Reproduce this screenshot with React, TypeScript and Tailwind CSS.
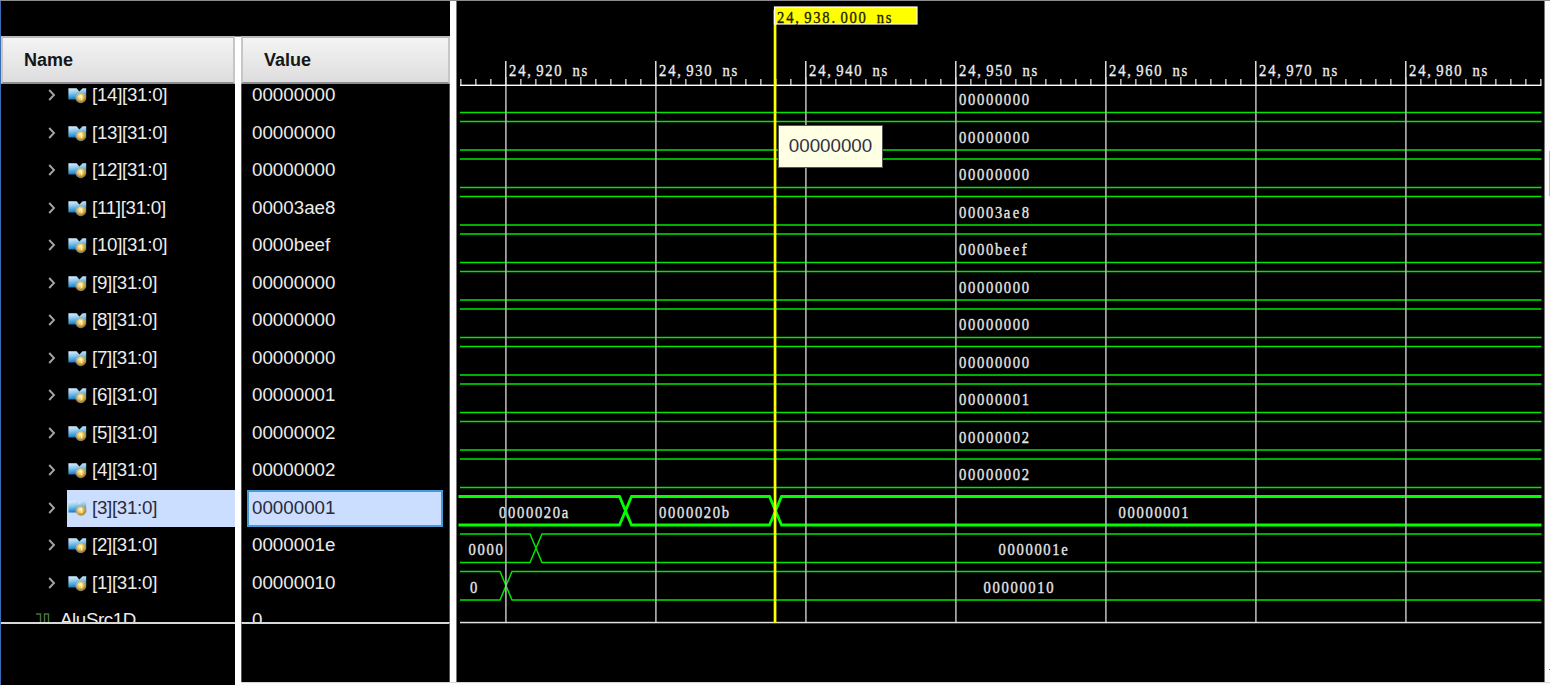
import React from "react";

type Row = { name: string; value: string };

const rows: Row[] = [
  { name: "[14][31:0]", value: "00000000" },
  { name: "[13][31:0]", value: "00000000" },
  { name: "[12][31:0]", value: "00000000" },
  { name: "[11][31:0]", value: "00003ae8" },
  { name: "[10][31:0]", value: "0000beef" },
  { name: "[9][31:0]", value: "00000000" },
  { name: "[8][31:0]", value: "00000000" },
  { name: "[7][31:0]", value: "00000000" },
  { name: "[6][31:0]", value: "00000001" },
  { name: "[5][31:0]", value: "00000002" },
  { name: "[4][31:0]", value: "00000002" },
  { name: "[3][31:0]", value: "00000001" },
  { name: "[2][31:0]", value: "0000001e" },
  { name: "[1][31:0]", value: "00000010" },
];
const SELECTED = 11;
const PITCH = 37.5;

function BusIcon() {
  return (
    <svg width="20" height="18" viewBox="0 0 20 18" className="block">
      <defs>
        <linearGradient id="bus" x1="0.2" y1="0" x2="0.4" y2="1">
          <stop offset="0" stopColor="#d8eefa" />
          <stop offset="0.4" stopColor="#8fcbee" />
          <stop offset="0.75" stopColor="#3f9ed8" />
          <stop offset="1" stopColor="#1c6ca6" />
        </linearGradient>
        <radialGradient id="coin" cx="0.4" cy="0.35" r="0.7">
          <stop offset="0" stopColor="#fff6cc" />
          <stop offset="0.5" stopColor="#ecc04a" />
          <stop offset="1" stopColor="#9a741c" />
        </radialGradient>
      </defs>
      <path d="M0.4 2.2H8.6L11.4 5.6L14.6 2.2H18.2V13.4H0.4Z" fill="url(#bus)" />
      <path d="M8.6 13.6L11 10L14 13.6Z" fill="#0c1c28" />
      <circle cx="12.8" cy="11.8" r="5.4" fill="#b9b4a4" opacity="0.7" />
      <circle cx="13.2" cy="11.9" r="4.4" fill="url(#coin)" />
      <path d="M12.4 9.8H13.7V14.2" fill="none" stroke="#fff8d8" strokeWidth="1" />
    </svg>
  );
}

function Chevron() {
  return (
    <svg width="8" height="12" viewBox="0 0 8 12" className="block">
      <path d="M1.2 1L6 6L1.2 11" fill="none" stroke="#a4a4a4" strokeWidth="1.9" />
    </svg>
  );
}

function Header({ children, pad }: { children: React.ReactNode; pad: string }) {
  return (
    <div
      className={`flex h-[48px] shrink-0 items-center border-2 border-t-[#b9b9b9] border-x-[#c6c6c8] border-b-[#8e8e90] bg-linear-to-b from-[#f4f4f4] to-[#dddddf] text-[18px] font-bold text-[#161616] ${pad}`}
    >
      {children}
    </div>
  );
}

function NameColumn() {
  return (
    <div className="flex h-full w-[235px] shrink-0 flex-col border-l border-[#3a6db5] bg-black">
      <div className="h-[36px] shrink-0" />
      <Header pad="pl-[21px]">Name</Header>
      <div className="h-[538px] shrink-0 overflow-hidden">
        <div className="-mt-[7px] flex flex-col">
          {rows.map((r, i) => (
            <div key={r.name} className="flex h-[37.5px] shrink-0 items-center pl-[47px]">
              <div className="w-[19px] pb-px">
                <Chevron />
              </div>
              <div
                className={
                  i === SELECTED
                    ? "flex h-full flex-1 items-center bg-[#ccdeff] text-[#2a2a3c]"
                    : "flex h-full flex-1 items-center text-[#ececec]"
                }
              >
                <div className="w-[25px] pb-px pl-px">
                  <BusIcon />
                </div>
                <span className="text-[18.75px] leading-none tracking-[-0.3px]">{r.name}</span>
              </div>
            </div>
          ))}
          <div className="flex h-[37.5px] shrink-0 items-center pl-[35px] text-[#ececec]">
            <svg width="24" height="18" viewBox="0 0 24 18" className="block">
              <path d="M0 2H4.5V13M8.5 12V2H12.5V11" fill="none" stroke="#47743a" strokeWidth="1.4" />
              <rect x="9" y="10" width="8" height="5" fill="#d5ead0" />
            </svg>
            <span className="text-[18.75px] leading-none tracking-[-0.4px]">AluSrc1D</span>
          </div>
        </div>
      </div>
      <div className="flex-1 border-t-2 border-[#d8d8d8]" />
    </div>
  );
}

function ValueColumn() {
  return (
    <div className="flex h-[682px] w-[209px] shrink-0 flex-col bg-black">
      <div className="h-[36px] shrink-0" />
      <Header pad="pl-[21px]">Value</Header>
      <div className="h-[538px] shrink-0 overflow-hidden border-x border-[#555]">
        <div className="-mt-[7px] flex flex-col text-[18.75px] leading-none">
          {rows.map((r, i) => (
            <div key={r.name} className="h-[37.5px] shrink-0 pr-[6px] pl-[5px]">
              <div
                className={
                  i === SELECTED
                    ? "flex h-full items-center border-2 border-[#459bd8] bg-[#ccdeff] pl-[3px] text-[#2a2a3c]"
                    : "flex h-full items-center pl-[5px] text-[#ececec]"
                }
              >
                {r.value}
              </div>
            </div>
          ))}
          <div className="flex h-[37.5px] shrink-0 items-center pl-[10px] text-[#ececec]">0</div>
        </div>
      </div>
      <div className="flex-1 border-x border-t-2 border-x-[#555] border-t-[#d8d8d8]" />
    </div>
  );
}

const GLYPH_SCALE = 0.86;

function CellText({ x, y, text, step, fill }: { x: number; y: number; text: string; step: number; fill: string }) {
  const xs = text.split("").map((_, i) => ((x + 0.6 + i * step) / GLYPH_SCALE).toFixed(2)).join(" ");
  return (
    <text
      x={xs}
      y={y}
      transform={`scale(${GLYPH_SCALE} 1)`}
      fill={fill}
      stroke={fill}
      strokeWidth="0.35"
      fontSize="17"
      className="font-['Liberation_Serif',serif]"
    >
      {text}
    </text>
  );
}

function busPath(top: number, bottom: number, start: number, end: number, cuts: number[], half: number) {
  let hi = `M${start} ${top}`;
  let lo = `M${start} ${bottom}`;
  let flip = false;
  for (const c of cuts) {
    const a = flip ? bottom : top;
    const b = flip ? top : bottom;
    hi += `L${c - half} ${a}L${c + half} ${b}`;
    lo += `L${c - half} ${b}L${c + half} ${a}`;
    flip = !flip;
  }
  hi += `L${end} ${flip ? bottom : top}`;
  lo += `L${end} ${flip ? top : bottom}`;
  return hi + lo;
}

const transitions: Record<number, number[]> = { 11: [625.5, 775.5], 12: [536], 13: [506] };
const grid = [506, 656, 806, 956, 1106, 1256, 1406];
const times = ["24,920 ns", "24,930 ns", "24,940 ns", "24,950 ns", "24,960 ns", "24,970 ns", "24,980 ns"];
const ticks = Array.from({ length: 73 }, (_, i) => 461 + i * 15);

const segmentLabels = [
  { row: 11, x: 498.5, text: "0000020a" },
  { row: 11, x: 658.5, text: "0000020b" },
  { row: 11, x: 1118, text: "00000001" },
  { row: 12, x: 468, text: "0000" },
  { row: 12, x: 998, text: "0000001e" },
  { row: 13, x: 469.5, text: "0" },
  { row: 13, x: 983, text: "00000010" },
];

function WavePane() {
  return (
    <div className="relative h-[682px] w-[1089px] shrink-0 border-x border-[#777] bg-black">
      <svg width="1087" height="682" viewBox="457 0 1087 682" className="block">
        {rows.map((r, i) => (
          <path
            key={r.name}
            d={busPath(84 + PITCH * i, 112.5 + PITCH * i, i === SELECTED ? 458.5 : 460, 1541.5, transitions[i] ?? [], 6)}
            fill="none"
            stroke={i === SELECTED ? "#00ff00" : "#00e600"}
            strokeWidth={i === SELECTED ? 2.8 : 1.5}
          />
        ))}
        <rect x="457" y="82" width="1087" height="3" fill="#000" />
        {rows.slice(0, 11).map((r, i) => (
          <CellText key={r.name} x={958.5} y={105.5 + PITCH * i} text={r.value} step={8.95} fill="#e6e6e6" />
        ))}
        {segmentLabels.map((s) => (
          <CellText key={s.row + s.text} x={s.x} y={105.5 + PITCH * s.row} text={s.text} step={8.95} fill="#e6e6e6" />
        ))}
        {grid.map((x, i) => (
          <g key={x}>
            <rect x={x - 0.9} y="86" width="1.6" height="536" fill="#b4b4b4" />
            <rect x={x - 0.9} y="61" width="1.4" height="25" fill="#f0f0f0" />
            <CellText x={x + 2.5} y={76} text={times[i]} step={9.05} fill="#ececec" />
          </g>
        ))}
        {ticks.map((x) => (
          <rect key={x} x={x - 0.8} y={(x - 506) % 75 === 0 ? 77 : 79} width="1.3" height={(x - 506) % 75 === 0 ? 8 : 6} fill="#dedede" />
        ))}
        <rect x="460" y="84.6" width="1081.5" height="1.4" fill="#fff" />
        <rect x="460" y="621.8" width="1081.5" height="1.5" fill="#e0e0e0" />
        <rect x="773.7" y="10" width="2.7" height="613" fill="#ffff00" />
        <rect x="774.5" y="7" width="142.5" height="17" fill="#ffff00" stroke="#fffff0" strokeWidth="1.2" />
        <CellText x={776.5} y={23} text="24,938.000 ns" step={9.05} fill="#1c1c00" />
      </svg>
      <div className="absolute top-[125px] left-[321px] flex h-[43px] w-[105px] items-center justify-center border border-[#555] bg-[#ffffe4] pb-px text-[18.75px] leading-none text-[#333344]">
        00000000
      </div>
    </div>
  );
}

export default function App() {
  return (
    <div className="relative flex h-[685px] w-[1550px] overflow-hidden bg-[#fbfbfb] font-['Liberation_Sans',Arial,sans-serif]">
      <NameColumn />
      <div className="flex w-[6px] shrink-0 flex-col">
        <div className="h-[37px] border-b border-[#888] bg-black" />
        <div className="flex-1 bg-white" />
      </div>
      <ValueColumn />
      <div className="w-[6px] shrink-0 bg-white" />
      <WavePane />
      <div className="flex flex-1 flex-col items-end bg-[#fafafa]">
        <div className="mt-[151px] h-[45px] w-px bg-[#bdbdbd]" />
        <div className="mt-[473px] h-px w-px bg-[#777]" />
      </div>
      <div className="absolute inset-x-0 top-0 h-px bg-[#8c8c8c]" />
      <div className="absolute right-0 bottom-[2px] left-[241px] h-px bg-[#d8d8d8]" />
    </div>
  );
}
